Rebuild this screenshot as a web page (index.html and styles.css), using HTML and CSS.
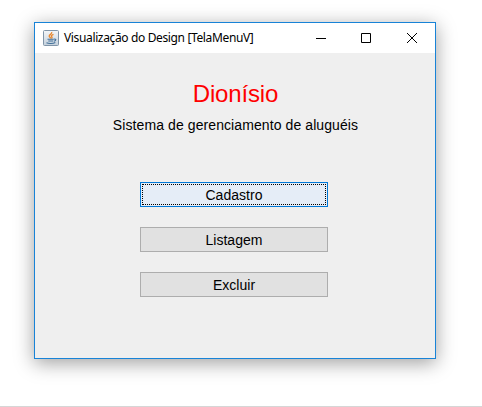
FILE: index.html
```html
<!DOCTYPE html>
<html lang="pt-BR">
<head>
<meta charset="utf-8">
<title>TelaMenuV</title>
<link rel="stylesheet" href="styles.css">
</head>
<body>
<main class="window">
  <header class="titlebar">
    <svg class="app-icon" width="16" height="16" viewBox="0 0 16 16">
      <defs><linearGradient id="g" x1="0" y1="0" x2="0" y2="1"><stop offset="0" stop-color="#f4f6f8"/><stop offset="1" stop-color="#c3d0dc"/></linearGradient></defs>
      <rect x=".5" y=".5" width="15" height="15" rx="1" fill="url(#g)" stroke="#8095a9"/>
      <path d="M8.7 2C9.5 4 5.8 4.6 6.2 6.3C6.4 7.1 7.6 7.6 7.7 8.5M10.5 4.4C8.2 5.3 8 6 8.8 6.8C9.3 7.3 9 8 8.5 8.5" fill="none" stroke="#e8872e" stroke-width="1.3"/>
      <path d="M4.5 9.3H10.8M5.3 11H10.3M3.5 12.8C5.5 13.8 10 13.8 12.3 12.6M11 9.2C13.6 8.5 13.3 10.8 11 11.2" fill="none" stroke="#416f98" stroke-width="1.1"/>
    </svg>
    <span class="caption">Visualização do Design [TelaMenuV]</span>
    <div class="controls">
      <svg viewBox="0 0 10 10"><path d="M0 5.5H10"/></svg>
      <svg viewBox="0 0 10 10"><path d="M.5 .5H9.5V9.5H.5Z"/></svg>
      <svg class="close" viewBox="0 0 10 10"><path d="M0 0L10 10M10 0L0 10"/></svg>
    </div>
  </header>
  <section class="content">
    <h1>Dionísio</h1>
    <p>Sistema de gerenciamento de aluguéis</p>
    <nav class="menu">
      <button class="focused"><span>Cadastro</span></button>
      <button><span>Listagem</span></button>
      <button><span>Excluir</span></button>
    </nav>
  </section>
</main>
</body>
</html>
```
FILE: styles.css
```css
* { box-sizing: border-box; }
body {
  margin: 0;
  height: 407px;
  padding: 22px 0 0 34px;
  overflow: hidden;
  background: #fff;
  border-bottom: 1px solid #d6d6d6;
  font-family: "Liberation Sans", sans-serif;
}
.window {
  width: 402px;
  height: 337px;
  border: 1px solid #1883d7;
  background: #efefef;
  box-shadow: 0 4px 18px rgba(0, 0, 0, .38);
}
.titlebar {
  display: flex;
  align-items: center;
  height: 30px;
  padding: 0 18px 0 8px;
  background: #fff;
}
.app-icon { display: block; }
.caption {
  margin-left: 5px;
  font: 12px/16px "Noto Sans", sans-serif;
  letter-spacing: -.36px;
  white-space: nowrap;
  color: #000;
}
.controls {
  display: flex;
  gap: 35px;
  margin-left: auto;
  margin-top: -1px;
}
.controls svg {
  display: block;
  width: 10px;
  height: 10px;
  fill: none;
  stroke: #000;
  overflow: visible;
}
.controls .close { margin-left: 1px; }
.content {
  display: flex;
  flex-direction: column;
  align-items: center;
  padding-top: 27px;
}
h1 {
  margin: 0 0 0 1px;
  font-size: 24px;
  font-weight: 400;
  line-height: 28px;
  letter-spacing: -.15px;
  color: #f00;
}
p {
  margin: 9px 0 0 1px;
  font-size: 14px;
  line-height: 16px;
  letter-spacing: .09px;
  white-space: nowrap;
}
.menu {
  display: grid;
  gap: 20px;
  margin-top: 49px;
  margin-right: 2px;
}
button {
  width: 188px;
  height: 25px;
  padding: 1px;
  border: 1px solid #adadad;
  border-radius: 0;
  background: #e1e1e1;
  font: 14px/18px "Liberation Sans", sans-serif;
  letter-spacing: .03px;
  color: #000;
}
button span {
  display: block;
  height: 21px;
  padding-top: 1px;
  border: 1px solid transparent;
}
button.focused {
  border-color: #0078d7;
  background: #e5edf7;
}
button.focused span { border: 1px dotted #000; }
```
